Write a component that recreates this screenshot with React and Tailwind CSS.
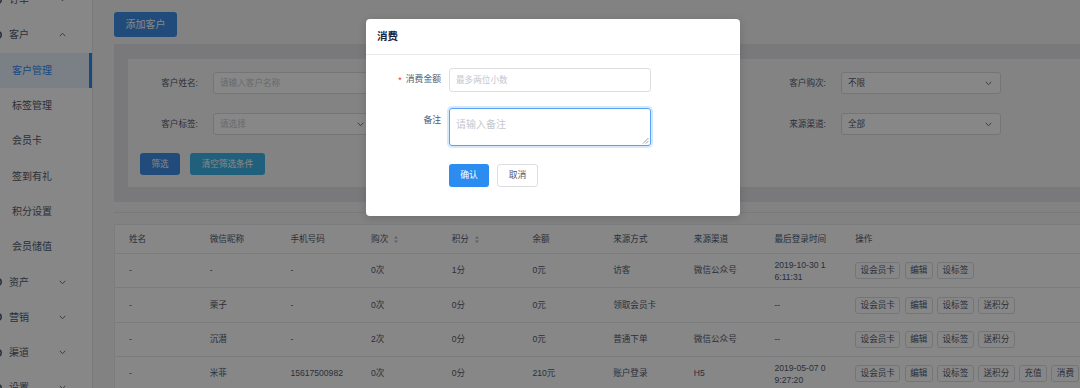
import React from "react";

const Chevron = ({ up = false }) => (
  <svg width="7" height="5" viewBox="0 0 7 5" className="shrink-0">
    {up ? (
      <path d="M0.8 4.2 L3.5 1.2 L6.2 4.2" fill="none" stroke="#6b6b6b" strokeWidth="0.9" />
    ) : (
      <path d="M0.8 0.8 L3.5 3.8 L6.2 0.8" fill="none" stroke="#6b6b6b" strokeWidth="0.9" />
    )}
  </svg>
);

const GroupIcon = () => (
  <svg width="10" height="10" viewBox="0 0 10 10" className="shrink-0 ml-[-7px]">
    <circle cx="5" cy="5" r="3.2" fill="none" stroke="#515a6e" strokeWidth="1.6" />
  </svg>
);

const Group = ({ label, up }) => (
  <div className="h-[35.3px] flex items-center shrink-0">
    <GroupIcon />
    <span className="ml-[6px] text-[10px] text-[#515a6e]">{label}</span>
    <span className="ml-auto mr-[26px] flex">
      <Chevron up={up} />
    </span>
  </div>
);

const SubItem = ({ label, active }) => (
  <div
    className={
      "h-[35.3px] flex items-center shrink-0 pl-[12px] text-[10px] " +
      (active
        ? "bg-[#e6f2fe] text-[#2d8cf0] border-r-[3px] border-[#2d8cf0]"
        : "text-[#515a6e]")
    }
  >
    {label}
  </div>
);

const Sidebar = () => (
  <aside className="w-[93px] shrink-0 bg-white border-r border-[#e4e6ea] overflow-hidden">
    <div className="flex flex-col mt-[-18px]">
      <Group label="订单" />
      <Group label="客户" up />
      <SubItem label="客户管理" active />
      <SubItem label="标签管理" />
      <SubItem label="会员卡" />
      <SubItem label="签到有礼" />
      <SubItem label="积分设置" />
      <SubItem label="会员储值" />
      <Group label="资产" />
      <Group label="营销" />
      <Group label="渠道" />
      <Group label="设置" />
    </div>
  </aside>
);

const SelectBox = ({ value, placeholder }) => (
  <div className="w-[160px] h-[22px] shrink-0 bg-white border border-[#dcdee2] rounded-[3px] flex items-center pl-[6px] pr-[8px]">
    <span className={"text-[8.6px] " + (placeholder ? "text-[#c5c8ce]" : "text-[#515a6e]")}>
      {value}
    </span>
    <span className="ml-auto flex">
      <Chevron />
    </span>
  </div>
);

const InputBox = ({ placeholder }) => (
  <div className="w-[160px] h-[22px] shrink-0 bg-white border border-[#dcdee2] rounded-[3px] flex items-center pl-[6px]">
    <span className="text-[8.6px] text-[#c5c8ce]">{placeholder}</span>
  </div>
);

const Field = ({ label, children }) => (
  <div className="w-[314px] shrink-0 flex items-center">
    <div className="w-[70px] text-right text-[8.6px] text-[#515a6e]">{label}</div>
    <div className="ml-[15px]">{children}</div>
  </div>
);

const SortIcon = () => (
  <svg width="6" height="9" viewBox="0 0 6 9" className="ml-[5px] shrink-0">
    <path d="M3 1 L5 3.4 L1 3.4 Z" fill="#b3b6bc" />
    <path d="M3 8 L5 5.6 L1 5.6 Z" fill="#b3b6bc" />
  </svg>
);

const ActBtn = ({ children }) => (
  <span className="h-[17px] px-[4.4px] flex items-center border border-[#dcdee2] rounded-[3px] bg-white text-[8.6px] text-[#515a6e] shrink-0">
    {children}
  </span>
);

const headers = ["姓名", "微信昵称", "手机号码", "购次", "积分", "余额", "来源方式", "来源渠道", "最后登录时间", "操作"];

const rows = [
  { c: ["-", "-", "-", "0次", "1分", "0元", "访客", "微信公众号"], date: ["2019-10-30 1", "6:11:31"], acts: ["设会员卡", "编辑", "设标签"] },
  { c: ["-", "栗子", "-", "0次", "0分", "0元", "领取会员卡", ""], date: ["--"], acts: ["设会员卡", "编辑", "设标签", "送积分"] },
  { c: ["-", "沉潜", "-", "2次", "0分", "0元", "普通下单", "微信公众号"], date: ["--"], acts: ["设会员卡", "编辑", "设标签", "送积分"] },
  { c: ["-", "米菲", "15617500982", "0次", "0分", "210元", "账户登录", "H5"], date: ["2019-05-07 0", "9:27:20"], acts: ["设会员卡", "编辑", "设标签", "送积分", "充值", "消费"] },
];

const Cell = ({ children, last }) => (
  <div className={(last ? "flex-1 min-w-0" : "w-[80.7px] shrink-0") + " pl-[14px] flex items-center"}>
    {children}
  </div>
);

const Table = () => (
  <div className="mt-[10px] border-t border-[#e3e5e9] pt-[11px]">
    <div className="bg-white border-l border-t border-[#e8eaec] text-[8.6px] text-[#515a6e]">
      <div className="h-[29px] flex border-b border-[#e8eaec]">
        {headers.map((h, i) => (
          <Cell key={h} last={i === headers.length - 1}>
            <span>{h}</span>
            {(h === "购次" || h === "积分") && <SortIcon />}
          </Cell>
        ))}
      </div>
      {rows.map((r, ri) => (
        <div key={ri} className="h-[34.4px] flex border-b border-[#e8eaec]">
          {r.c.map((v, i) => (
            <Cell key={i}>
              <span>{v}</span>
            </Cell>
          ))}
          <Cell>
            <div className="flex flex-col leading-[12px]">
              {r.date.map((d, i) => (
                <span key={i} className="whitespace-nowrap">{d}</span>
              ))}
            </div>
          </Cell>
          <Cell last>
            <div className="flex gap-[4.4px]">
              {r.acts.map((a) => (
                <ActBtn key={a}>{a}</ActBtn>
              ))}
            </div>
          </Cell>
        </div>
      ))}
    </div>
  </div>
);

const Main = () => (
  <main className="flex-1 min-w-0 pl-[21px] pt-[12px] bg-[#f5f6f8] overflow-hidden">
    <button className="w-[63px] h-[25px] rounded-[3px] bg-[#3d8fe6] text-white text-[10px] flex items-center justify-center">
      添加客户
    </button>
    <div className="mt-[7px] bg-[#e4e5e8] pt-[15px] pl-[14px] pb-[15px]">
      <div className="bg-[#f8f8f9] pt-[13px] pb-[12px]">
        <div className="flex">
          <Field label="客户姓名:">
            <InputBox placeholder="请输入客户名称" />
          </Field>
          <Field label="">
            <InputBox placeholder="" />
          </Field>
          <Field label="客户购次:">
            <SelectBox value="不限" />
          </Field>
        </div>
        <div className="flex mt-[19px]">
          <Field label="客户标签:">
            <SelectBox value="请选择" placeholder />
          </Field>
          <Field label="">
            <SelectBox value="" />
          </Field>
          <Field label="来源渠道:">
            <SelectBox value="全部" />
          </Field>
        </div>
        <div className="flex mt-[18px] pl-[12px] gap-[10px]">
          <button className="w-[40px] h-[22px] rounded-[3px] bg-[#3d8fe6] text-white text-[8.6px] flex items-center justify-center">
            筛选
          </button>
          <button className="w-[75px] h-[22px] rounded-[3px] bg-[#3fb6ea] text-white text-[8.6px] flex items-center justify-center">
            清空筛选条件
          </button>
        </div>
      </div>
    </div>
    <Table />
  </main>
);

const Modal = () => (
  <div className="absolute left-[366px] top-[19px] w-[374px] bg-white rounded-[4px] shadow-[0_2px_8px_rgba(0,0,0,0.15)]">
    <div className="h-[36px] px-[11px] flex items-center border-b border-[#e8eaec] text-[10.5px] font-semibold text-[#17233d]">
      消费
    </div>
    <div className="pt-[13px] pb-[29px]">
      <div className="flex items-center">
        <div className="w-[75px] flex justify-end items-center text-[8.8px] text-[#515a6e]">
          <span className="text-[#ed4014] text-[9px] mr-[4px] leading-none">*</span>
          消费金额
        </div>
        <div className="ml-[8px] w-[202px] h-[24px] border border-[#dcdee2] rounded-[3px] flex items-center pl-[6px]">
          <span className="text-[8.6px] text-[#c5c8ce]">最多两位小数</span>
        </div>
      </div>
      <div className="flex items-start mt-[16px]">
        <div className="w-[75px] text-right pt-[6px] leading-[12px] text-[8.8px] text-[#515a6e]">备注</div>
        <div className="relative ml-[8px] w-[202px] h-[38px] border border-[#57a3f3] rounded-[3px] px-[6px] pt-[2px] shadow-[0_0_0_2px_rgba(45,140,240,0.2)]">
          <span className="text-[10px] leading-[14px] text-[#c5c8ce]">请输入备注</span>
          <svg width="7" height="7" viewBox="0 0 7 7" className="absolute right-[1px] bottom-[1px]">
            <path d="M6.5 1 L1 6.5 M6.5 3.8 L3.8 6.5" stroke="#8a8a8a" strokeWidth="0.8" />
          </svg>
        </div>
      </div>
      <div className="flex mt-[18px] ml-[83px] gap-[8px]">
        <button className="w-[40px] h-[23px] rounded-[3px] bg-[#2d8cf0] text-white text-[8.8px] flex items-center justify-center">
          确认
        </button>
        <button className="w-[41px] h-[23px] rounded-[3px] bg-white border border-[#dcdee2] text-[#515a6e] text-[8.8px] flex items-center justify-center">
          取消
        </button>
      </div>
    </div>
  </div>
);

export default function App() {
  return (
    <div className="relative w-[1080px] h-[388px] overflow-hidden flex bg-[#f5f6f8] font-['Liberation_Sans','Noto_Sans_CJK_SC',sans-serif] text-[#515a6e]">
      <Sidebar />
      <Main />
      <div className="absolute inset-0 bg-[rgba(0,0,0,0.47)]" />
      <Modal />
    </div>
  );
}
